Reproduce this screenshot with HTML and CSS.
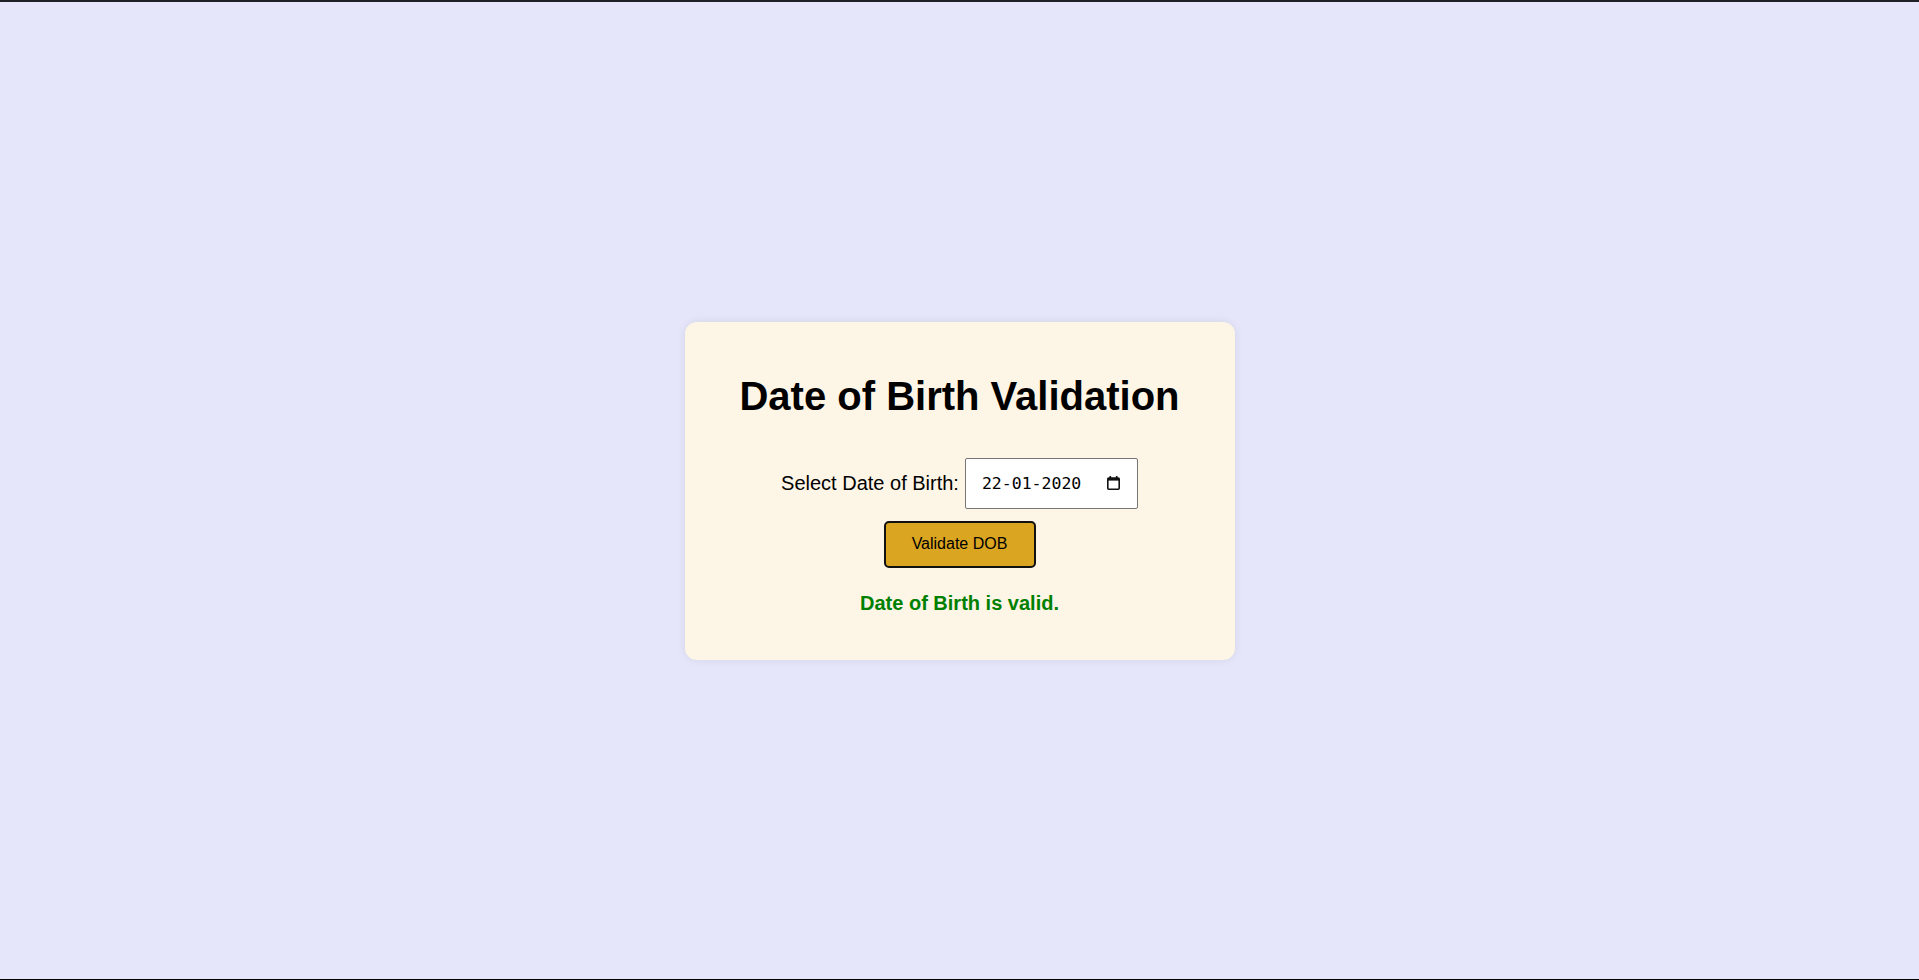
FILE: index.html
```html
<!DOCTYPE html>
<html lang="en">
<head>
<meta charset="utf-8">
<title>Date of Birth Validation</title>
<link rel="stylesheet" href="styles.css">
</head>
<body>
  <div class="card">
    <h1 class="title">Date of Birth Validation</h1>
    <div class="field-row">
      <label class="field-label" for="dob">Select Date of Birth:</label>
      <div class="date-input" id="dob">
        <span class="date-value">22-01-2020</span>
        <svg class="cal-icon" width="13" height="14" viewBox="0 0 13 14" aria-hidden="true">
          <rect x="2.5" y="0" width="1.6" height="3" fill="#111"/>
          <rect x="8.9" y="0" width="1.6" height="3" fill="#111"/>
          <rect x="0.8" y="2" width="11.4" height="11.2" rx="1" fill="none" stroke="#111" stroke-width="1.6"/>
          <rect x="0.8" y="2" width="11.4" height="2.6" fill="#111"/>
        </svg>
      </div>
    </div>
    <button class="validate-btn" type="button">Validate DOB</button>
    <p class="result">Date of Birth is valid.</p>
  </div>
</body>
</html>
```

FILE: styles.css
```css
html, body {
  margin: 0;
  padding: 0;
}

body {
  box-sizing: border-box;
  background: #e6e6fa;
  font-family: "Liberation Sans", Arial, sans-serif;
  height: 100vh;
  border-top: 2px solid #202124;
  border-bottom: 1px solid #000;
  display: flex;
  align-items: center;
  justify-content: center;
}

.card {
  box-sizing: border-box;
  width: 550px;
  background: #fdf5e6;
  border-radius: 12px;
  box-shadow: 0 0 10px rgba(0, 0, 0, 0.08);
  padding: 24px 30px 24px;
  display: flex;
  flex-direction: column;
  align-items: center;
  text-align: center;
}

.title {
  font-size: 40px;
  font-weight: bold;
  color: #000;
  margin: 27px 0 39px;
  line-height: 46px;
}

.field-row {
  display: flex;
  align-items: center;
  justify-content: center;
  gap: 6px;
}

.field-label {
  font-size: 20px;
  color: #000;
}

.date-input {
  box-sizing: border-box;
  width: 173px;
  height: 51px;
  background: #fff;
  border: 1px solid #767676;
  border-radius: 2px;
  display: flex;
  align-items: center;
  justify-content: space-between;
  padding: 0 17px 0 16px;
}

.date-value {
  font-family: "DejaVu Sans Mono", "Liberation Mono", monospace;
  font-size: 16.5px;
  color: #000;
}

.cal-icon {
  display: block;
}

.validate-btn {
  margin-top: 12px;
  box-sizing: border-box;
  width: 152px;
  height: 47px;
  background: #daa520;
  border: 2px solid #111;
  border-radius: 5px;
  font-family: "Liberation Sans", Arial, sans-serif;
  font-size: 16px;
  color: #000;
  padding: 0;
}

.result {
  margin: 24px 0 21px;
  font-size: 20px;
  font-weight: bold;
  color: #008000;
  line-height: 23px;
}
```
